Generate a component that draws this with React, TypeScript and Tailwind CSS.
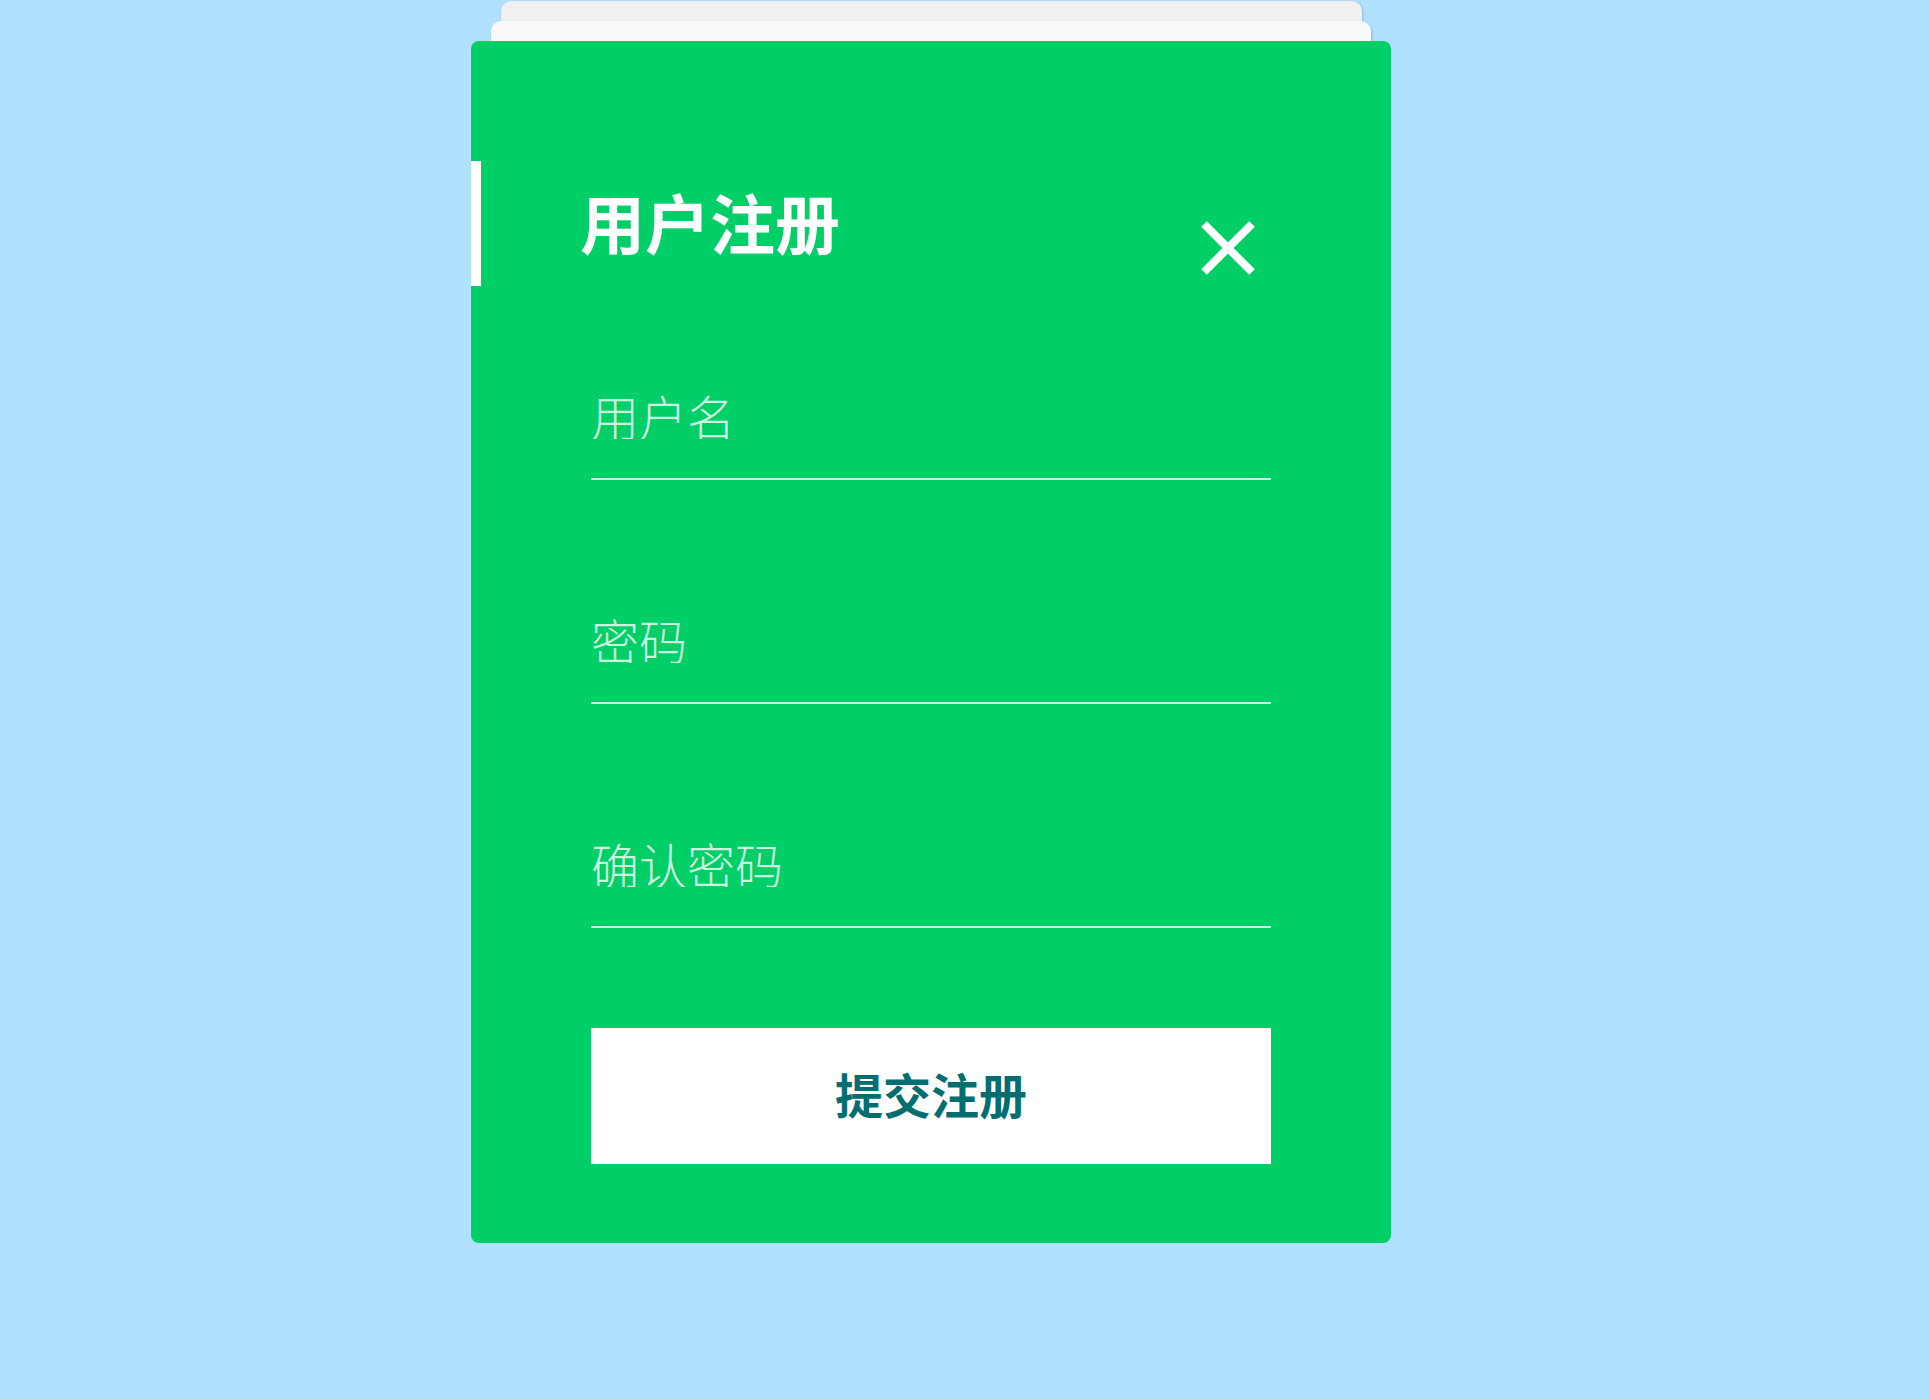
import React from "react";

const font = { fontFamily: '"Noto Sans CJK SC", "Noto Sans", sans-serif' };

function Field({ placeholder, type = "text" }: { placeholder: string; type?: string }) {
  return (
    <div className="border-b-2 border-[#ccf5e0]">
      <input
        type={type}
        placeholder={placeholder}
        className="block w-full h-[48px] mb-[39px] bg-transparent outline-none border-0 p-0 text-[48px] leading-[48px] font-light text-white placeholder:text-[#ccf5e0] font-['Noto_Sans_CJK_SC',sans-serif]"
      />
    </div>
  );
}

export default function App() {
  return (
    <div className="min-h-[1399px] w-full bg-[#b0e1fe]" style={font}>
      <div className="ml-[471px] w-[920px] flex flex-col items-center pt-[1px]">
        <div className="w-[861px] h-[40px] rounded-t-[10px] bg-[#f0f0f0] shadow-[1px_1px_3px_rgba(0,0,0,0.18)]" />
        <div className="relative -mt-[20px] w-[880px] h-[40px] rounded-t-[10px] bg-[#f9f9f9] shadow-[1px_1px_3px_rgba(0,0,0,0.18)]" />
        <div className="relative -mt-[20px] w-[920px] rounded-[8px] bg-[#00ce66] pb-[79px]">
          <div className="flex items-start pt-[120px]">
            <div className="w-[10px] h-[125px] bg-white" />
            <h1 className="ml-[99px] mt-[28px] text-[65px] leading-[65px] font-bold text-white">
              用户注册
            </h1>
            <button className="ml-auto mr-[136px] mt-[60px] p-0 bg-transparent border-0" aria-label="关闭">
              <svg width="54" height="54" viewBox="0 0 54 54">
                <line x1="3" y1="3" x2="51" y2="51" stroke="white" strokeWidth="8" />
                <line x1="51" y1="3" x2="3" y2="51" stroke="white" strokeWidth="8" />
              </svg>
            </button>
          </div>
          <div className="px-[120px] mt-[105px] flex flex-col gap-[135px]">
            <Field placeholder="用户名" />
            <Field placeholder="密码" type="password" />
            <Field placeholder="确认密码" type="password" />
          </div>
          <div className="px-[120px] mt-[100px]">
            <button className="w-full h-[136px] pb-[6px] bg-white text-[48px] leading-[48px] font-bold text-[#036e70] flex items-center justify-center">
              提交注册
            </button>
          </div>
        </div>
      </div>
    </div>
  );
}
